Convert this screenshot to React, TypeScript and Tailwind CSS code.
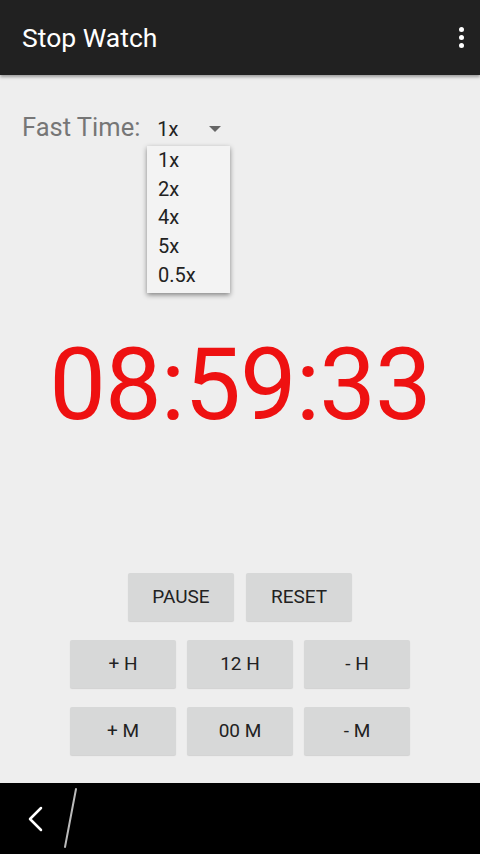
import React from "react";

const speeds = ["1x", "2x", "4x", "5x", "0.5x"];

const Btn = ({ label }: { label: string }) => (
  <button className="h-[48px] w-[106px] rounded-[2px] bg-[#d7d8d8] text-[19px] text-[#222] shadow-[0_1px_1px_rgba(0,0,0,0.12)]">
    {label}
  </button>
);

export default function App() {
  return (
    <div
      className="flex h-[854px] w-[480px] flex-col bg-[#eeeeee]"
      style={{ fontFamily: "Roboto, 'Noto Sans', sans-serif" }}
    >
      {/* action bar */}
      <div className="relative z-10 flex h-[75px] shrink-0 items-center justify-between bg-[#212121] pl-[22px] pr-[16px] shadow-[0_2px_3px_rgba(0,0,0,0.35)]">
        <span className="text-[26.5px] text-white">Stop Watch</span>
        <div className="flex flex-col items-center gap-[3px]">
          <span className="h-[5px] w-[5px] rounded-full bg-white" />
          <span className="h-[5px] w-[5px] rounded-full bg-white" />
          <span className="h-[5px] w-[5px] rounded-full bg-white" />
        </div>
      </div>

      {/* content */}
      <div className="flex flex-1 flex-col">
        <div className="relative mt-[36px] flex items-end pl-[22px]">
          <span className="text-[25.5px] leading-[33px] text-[#767676]">Fast Time:</span>
          <span className="ml-[17px] text-[20px] leading-[30px] text-[#222]">1x</span>
          <span className="mb-[12px] ml-[30px] h-0 w-0 border-x-[6px] border-t-[6px] border-x-transparent border-t-[#666]" />

          <div className="absolute left-[147px] top-[35px] flex w-[83px] flex-col bg-[#f3f3f3] pb-[3px] pl-[11px] pt-[0px] shadow-[0_2px_5px_rgba(0,0,0,0.45)]">
            {speeds.map((s) => (
              <span key={s} className="text-[20px] leading-[28.7px] text-[#222]">
                {s}
              </span>
            ))}
          </div>
        </div>

        <div className="mt-[190px] flex justify-center">
          <span className="text-[101px] leading-none tracking-[-1px] text-[#ee1111]">08:59:33</span>
        </div>

        <div className="mt-[138px] flex justify-center gap-[12px]">
          <Btn label="PAUSE" />
          <Btn label="RESET" />
        </div>
        <div className="mt-[19px] flex justify-center gap-[11px]">
          <Btn label="+ H" />
          <Btn label="12 H" />
          <Btn label="- H" />
        </div>
        <div className="mt-[19px] flex justify-center gap-[11px]">
          <Btn label="+ M" />
          <Btn label="00 M" />
          <Btn label="- M" />
        </div>
      </div>

      {/* system nav bar */}
      <div className="flex h-[71px] shrink-0 bg-black">
        <svg width="100" height="71" viewBox="0 0 100 71">
          <path d="M41 25 L30 36 L41 47" fill="none" stroke="#fff" strokeWidth="2.5" strokeLinecap="round" strokeLinejoin="round" />
          <path d="M76 6 L65 64" fill="none" stroke="#bbb" strokeWidth="2" strokeLinecap="round" />
        </svg>
      </div>
    </div>
  );
}
